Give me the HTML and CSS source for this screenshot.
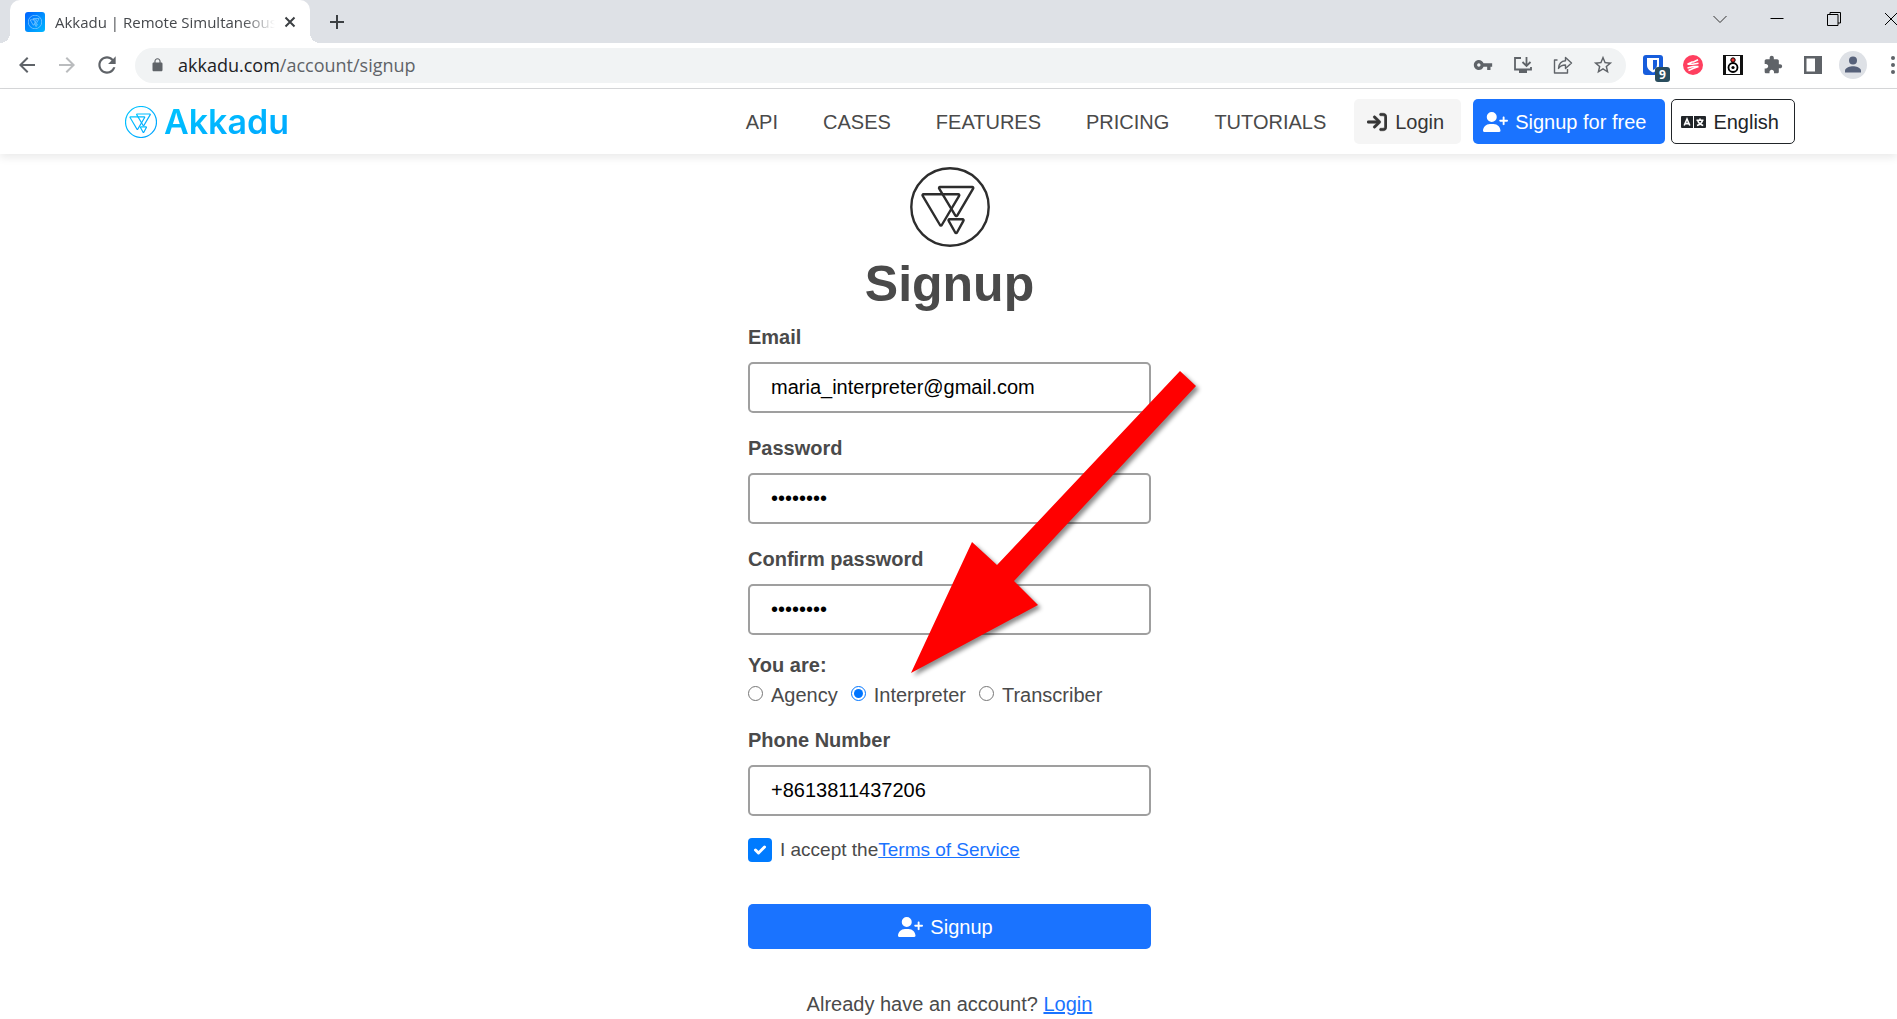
FILE: index.html
```html
<!DOCTYPE html>
<html lang="en">
<head>
<meta charset="utf-8">
<title>Akkadu | Remote Simultaneous Interpretation</title>
<link rel="stylesheet" href="styles.css">
</head>
<body>
<svg class="defs" aria-hidden="true">
  <defs>
    <linearGradient id="sky" x1="0" y1="0" x2="1" y2="1"><stop offset="0" stop-color="#00c8ff"/><stop offset="1" stop-color="#00a0ff"/></linearGradient>
    <linearGradient id="tile" x1="0" y1="0" x2="1" y2="1"><stop offset="0" stop-color="#0062ff"/><stop offset="1" stop-color="#00b8ff"/></linearGradient>
    <symbol id="mark" viewBox="0 0 80 80">
      <g fill="none" stroke-linejoin="round">
        <circle cx="40" cy="40" r="38.7"/>
        <path d="M13.5 27.3H48.3a1 1 0 0 1 .8 1.6L31.8 58a1 1 0 0 1-1.800 0L12.700 28.900a1 1 0 0 1 .8-1.600z"/>
        <path d="M30 20H62.300a1 1 0 0 1 .8 1.600L47.200 48.600a1 1 0 0 1-1.800 0L29.200 21.600a1 1 0 0 1 .8-1.600z"/>
        <path d="M39.500 52.200H52.600a1 1 0 0 1 .8 1.600L47 65.500a1 1 0 0 1-1.800 0L38.700 53.800a1 1 0 0 1 .8-1.600z"/>
      </g>
    </symbol>
    <symbol id="user-plus" viewBox="0 0 640 512"><path d="M96 128a128 128 0 1 1 256 0A128 128 0 1 1 96 128zM0 482.3C0 383.8 79.8 304 178.300 304h91.400C368.200 304 448 383.800 448 482.300c0 16.400-13.300 29.700-29.700 29.700H29.700C13.300 512 0 498.700 0 482.300zM504 312V248H440c-13.300 0-24-10.700-24-24s10.700-24 24-24h64V136c0-13.300 10.700-24 24-24s24 10.700 24 24v64h64c13.300 0 24 10.700 24 24s-10.700 24-24 24H552v64c0 13.300-10.700 24-24 24s-24-10.700-24-24z"/></symbol>
  </defs>
</svg>

<div class="tabstrip">
  <div class="tab">
    <svg class="favicon" viewBox="0 0 20 20"><rect width="20" height="20" rx="3" fill="url(#tile)"/><use class="mark-fav" href="#mark" x="3" y="3" width="14" height="14"/></svg>
    <span class="tab-title">Akkadu | Remote Simultaneous</span>
    <button class="tab-close" aria-label="Close tab"><svg width="12" height="12" viewBox="0 0 12 12"><path d="M1.500 1.500l9 9M10.500 1.500l-9 9" stroke="#3c4043" stroke-width="2"/></svg></button>
  </div>
  <button class="new-tab" aria-label="New tab"><svg width="16" height="16" viewBox="0 0 16 16"><path d="M8 1v14M1 8h14" stroke="#3c4043" stroke-width="2"/></svg></button>
  <div class="window-buttons">
    <button aria-label="Search tabs"><svg width="14" height="14" viewBox="0 0 14 14"><path d="M.5 4L7 10.500 13.500 4" fill="none" stroke="#333"/></svg></button>
    <button aria-label="Minimize"><svg width="14" height="14" viewBox="0 0 14 14"><path d="M.5 6.500h13" stroke="#000"/></svg></button>
    <button aria-label="Restore"><svg width="14" height="14" viewBox="0 0 14 14"><path d="M.5 2.500h10.500v11H.5zM3 2.500V.5h10.500v10.500H11" fill="none" stroke="#000"/></svg></button>
    <button aria-label="Close"><svg width="14" height="14" viewBox="0 0 14 14"><path d="M1 1l12 12M13 1L1 13" stroke="#000"/></svg></button>
  </div>
</div>

<div class="toolbar">
  <button class="tool" aria-label="Back"><svg width="24" height="24" viewBox="0 0 24 24"><path fill="#5f6368" d="M20 11H7.830l5.590-5.590L12 4l-8 8 8 8 1.410-1.410L7.830 13H20v-2z"/></svg></button>
  <button class="tool" aria-label="Forward"><svg width="24" height="24" viewBox="0 0 24 24"><path fill="#babcbe" d="M12 4l-1.410 1.410L16.170 11H4v2h12.170l-5.580 5.590L12 20l8-8z"/></svg></button>
  <button class="tool" aria-label="Reload"><svg width="26" height="26" viewBox="0 0 24 24"><path fill="#5f6368" d="M17.650 6.350C16.200 4.900 14.210 4 12 4c-4.420 0-7.990 3.580-7.990 8s3.570 8 7.990 8c3.730 0 6.840-2.550 7.730-6h-2.080c-.82 2.330-3.040 4-5.650 4-3.310 0-6-2.690-6-6s2.690-6 6-6c1.660 0 3.140.69 4.220 1.780L13 11h7V4l-2.350 2.350z"/></svg></button>
  <div class="omnibox">
    <svg class="lock" width="15" height="16" viewBox="0 0 24 24"><path fill="#5f6368" d="M18 8h-1V6c0-2.760-2.240-5-5-5S7 3.240 7 6v2H6c-1.100 0-2 .9-2 2v10c0 1.100.9 2 2 2h12c1.100 0 2-.9 2-2V10c0-1.100-.9-2-2-2zM15.100 8H8.900V6c0-1.710 1.390-3.100 3.100-3.100s3.100 1.390 3.100 3.100v2z"/></svg>
    <div class="url">akkadu.com<span class="path">/account/signup</span></div>
    <button class="tool" aria-label="Passwords"><svg width="20" height="20" viewBox="0 0 24 24"><path fill="#5f6368" d="M12.650 10C11.830 7.670 9.610 6 7 6c-3.310 0-6 2.690-6 6s2.690 6 6 6c2.610 0 4.830-1.670 5.650-4H17v4h4v-4h2v-4H12.650zM7 14c-1.100 0-2-.9-2-2s.9-2 2-2 2 .9 2 2-.9 2-2 2z"/></svg></button>
    <button class="tool" aria-label="Install"><svg width="20" height="20" viewBox="0 0 20 20"><path d="M8 3H2v11.500h16V12" fill="none" stroke="#5f6368" stroke-width="1.800"/><path d="M6 14h8v4H6z" fill="#5f6368"/><path d="M13.500 2v8M9.500 7l4 4 4-4" fill="none" stroke="#5f6368" stroke-width="1.800"/></svg></button>
    <button class="tool" aria-label="Share"><svg width="20" height="20" viewBox="0 0 20 20"><path d="M4.500 5H1.500v13h13v-4M5.500 13.500c.3-5 3-7.500 7-7.800V2.500l6 5.500-6 5.500v-3.500c-3.500 0-5.500 1-7 3.500z" fill="none" stroke="#5f6368" stroke-width="1.400" stroke-linejoin="round"/></svg></button>
    <button class="tool" aria-label="Bookmark"><svg width="22" height="22" viewBox="0 0 24 24"><path fill="#5f6368" d="M22 9.240l-7.190-.62L12 2 9.190 8.630 2 9.240l5.460 4.730L5.820 21 12 17.270 18.180 21l-1.630-7.030L22 9.240zM12 15.400l-3.760 2.270 1-4.280-3.320-2.880 4.380-.38L12 6.100l1.710 4.040 4.380.38-3.320 2.880 1 4.280L12 15.400z"/></svg></button>
  </div>
  <button class="tool badge-host" aria-label="Bitwarden"><svg width="20" height="20" viewBox="0 0 20 20"><rect width="20" height="20" rx="3" fill="#175ddc"/><path d="M4 3h12v7c0 4-3 6-6 7.500C7 16 4 14 4 10z" fill="#fff"/><path d="M10 5h4v5c0 2.500-2 4-4 5z" fill="#175ddc"/></svg><span class="badge">9</span></button>
  <button class="tool" aria-label="Recorder"><svg width="20" height="20" viewBox="0 0 20 20"><circle cx="10" cy="10" r="10" fill="#ff3f5f"/><path d="M4.500 9.300L9 7l1.500 0L15 4.800M4.500 9.300h5L15.500 8.200M4.500 13L10 11.500h5.500M5.500 15.500L10 13.500l5.500-2" fill="none" stroke="#fff" stroke-width="1.600"/></svg></button>
  <button class="tool" aria-label="Volume"><svg width="20" height="20" viewBox="0 0 20 20"><rect width="20" height="20" fill="#111"/><rect x="3" y="1" width="14" height="18" fill="#fff"/><circle cx="10" cy="12.500" r="4.500" fill="none" stroke="#000" stroke-width="1.800"/><circle cx="10" cy="12.500" r="1.600"/><circle cx="10" cy="5" r="2.200" fill="#e33" stroke="#000"/></svg></button>
  <button class="tool" aria-label="Extensions"><svg width="20" height="20" viewBox="0 0 24 24"><path fill="#5f6368" d="M20.500 11H19V7c0-1.100-.9-2-2-2h-4V3.500C13 2.120 11.880 1 10.500 1S8 2.120 8 3.500V5H4c-1.100 0-1.990.9-1.990 2v3.800H3.500c1.490 0 2.700 1.210 2.700 2.700s-1.210 2.700-2.700 2.700H2V20c0 1.100.9 2 2 2h3.800v-1.500c0-1.490 1.210-2.700 2.700-2.700 1.490 0 2.700 1.210 2.700 2.700V22H17c1.100 0 2-.9 2-2v-4h1.500c1.380 0 2.500-1.120 2.500-2.500S21.880 11 20.500 11z"/></svg></button>
  <button class="tool" aria-label="Side panel"><svg width="18" height="18" viewBox="0 0 18 18"><path fill="#5f6368" fill-rule="evenodd" d="M0 0h18v18H0zM2.500 2.500v13H11v-13z"/></svg></button>
  <button class="tool" aria-label="Profile"><svg width="28" height="28" viewBox="0 0 28 28"><circle cx="14" cy="14" r="14" fill="#dee1e6"/><circle cx="14" cy="9.500" r="4" fill="#56617a"/><path d="M6 21.500v-2c0-2.700 5.300-4.200 8-4.200s8 1.500 8 4.200v2z" fill="#56617a"/></svg></button>
  <button class="tool" aria-label="Menu"><svg width="4" height="18" viewBox="0 0 4 18"><g fill="#5f6368"><circle cx="2" cy="2" r="2"/><circle cx="2" cy="9" r="2"/><circle cx="2" cy="16" r="2"/></g></svg></button>
</div>

<header class="site-header">
  <a class="brand" href="#"><svg class="brand-mark" width="32" height="32"><use href="#mark"/></svg><span class="brand-name">Akkadu</span></a>
  <nav class="links">
    <a href="#">API</a>
    <a href="#">CASES</a>
    <a href="#">FEATURES</a>
    <a href="#">PRICING</a>
    <a href="#">TUTORIALS</a>
  </nav>
  <div class="actions">
    <button class="btn btn-light"><svg width="20" height="20" viewBox="0 0 512 512"><path fill="currentColor" stroke="currentColor" stroke-width="14" d="M352 96h64c17.700 0 32 14.300 32 32V384c0 17.700-14.300 32-32 32H352c-17.700 0-32 14.300-32 32s14.300 32 32 32h64c53 0 96-43 96-96V128c0-53-43-96-96-96H352c-17.700 0-32 14.300-32 32s14.300 32 32 32zm-9.400 182.600c12.500-12.500 12.500-32.800 0-45.300l-128-128c-12.500-12.500-32.800-12.500-45.300 0s-12.500 32.800 0 45.300L242.700 224H32c-17.700 0-32 14.300-32 32s14.300 32 32 32H242.700l-73.400 73.400c-12.500 12.500-12.500 32.800 0 45.300s32.800 12.500 45.300 0l128-128z"/></svg>Login</button>
    <button class="btn btn-primary"><svg width="25" height="20" fill="currentColor"><use href="#user-plus"/></svg>Signup for free</button>
    <button class="btn btn-outline"><svg width="25" height="20" viewBox="0 0 25 20"><path d="M1 4h11v12H1a1 1 0 0 1-1-1V5a1 1 0 0 1 1-1zM13 4h11a1 1 0 0 1 1 1v10a1 1 0 0 1-1 1H13z" fill="#212529"/><path d="M3.200 13.500L6 7l2.800 6.500M4.300 11.600h3.400M15.500 8.200h7M19 6.500v1.700M21.500 8.500c-.8 2.500-3 4.300-5.500 5M16.800 9c.8 2 2.900 4 5.400 4.500" fill="none" stroke="#fff" stroke-width="1.600"/></svg>English</button>
  </div>
</header>

<main class="page">
  <form class="signup">
    <svg class="logo" width="80" height="80"><use href="#mark"/></svg>
    <h1>Signup</h1>

    <div class="field">
      <label for="email">Email</label>
      <input class="box" id="email" type="email" value="maria_interpreter@gmail.com">
    </div>
    <div class="field">
      <label for="password">Password</label>
      <input class="box" id="password" type="password" value="password">
    </div>
    <div class="field">
      <label for="confirm">Confirm password</label>
      <input class="box" id="confirm" type="password" value="password">
    </div>

    <fieldset class="role">
      <legend>You are:</legend>
      <div class="choices">
        <label><input type="radio" name="role">Agency</label>
        <label><input type="radio" name="role" checked>Interpreter</label>
        <label><input type="radio" name="role">Transcriber</label>
      </div>
    </fieldset>

    <div class="field">
      <label for="phone">Phone Number</label>
      <input class="box" id="phone" type="tel" value="+8613811437206">
    </div>

    <div class="terms">
      <input id="terms" type="checkbox" checked>
      <label for="terms">I accept the</label><a href="#">Terms of Service</a>
    </div>

    <button class="btn btn-primary submit" type="button"><svg width="25" height="20" fill="currentColor"><use href="#user-plus"/></svg>Signup</button>
    <p class="alt">Already have an account? <a href="#">Login</a></p>

    <svg class="pointer" width="300" height="320" viewBox="0 0 300 320" aria-hidden="true"><path fill="#f00" d="M11 313L72 182 97 205 280 11 296 26 114 221 138 245z"/></svg>
  </form>
</main>
</body>
</html>
```
FILE: styles.css
```css
* { box-sizing: border-box; }
body {
  margin: 0;
  background: #fff;
  color: #4a4a4a;
  font: 20px/30px "Liberation Sans", Arial, sans-serif;
  overflow-x: hidden;
}
button { border: 0; padding: 0; background: none; font: inherit; color: inherit; }
a { color: #1a73ff; }
svg { display: block; flex: none; }
.defs { position: absolute; width: 0; height: 0; }

/* browser window */
.tabstrip { display: flex; height: 43px; padding-left: 10px; background: #dee1e6; overflow: hidden; }
.tab {
  position: relative;
  display: flex;
  align-items: center;
  width: 300px;
  padding: 0 14px 0 15px;
  border-radius: 10px 10px 0 0;
  background: #fff;
}
.tab::before, .tab::after {
  content: "";
  position: absolute;
  bottom: 0;
  width: 10px;
  height: 10px;
}
.tab::before { left: -10px; background: radial-gradient(circle at 0 0, #dee1e6 10px, #fff 10px); }
.tab::after { right: -10px; background: radial-gradient(circle at 100% 0, #dee1e6 10px, #fff 10px); }
.favicon { width: 20px; height: 20px; }
.mark-fav { stroke: #8cd0ff; stroke-width: 4px; }
.tab-title {
  flex: 1;
  margin: 0 9px 0 10px;
  overflow: hidden;
  white-space: nowrap;
  font: 15px/22px "Open Sans", "Noto Sans", sans-serif;
  color: #45484c;
  -webkit-mask-image: linear-gradient(to right, #000 85%, transparent);
  mask-image: linear-gradient(to right, #000 85%, transparent);
}
.new-tab { width: 54px; display: flex; align-items: center; justify-content: center; }
.window-buttons { display: flex; height: 37px; margin: 0 -22px 0 auto; }
.window-buttons button { width: 57px; display: flex; align-items: center; justify-content: center; }

.toolbar {
  display: flex;
  align-items: center;
  height: 46px;
  padding: 0 0 1px 7px;
  margin-right: -16px;
  border-bottom: 1px solid #d6d7d9;
}
.tool { display: flex; align-items: center; justify-content: center; flex: none; width: 40px; height: 34px; }
.omnibox {
  flex: 1;
  display: flex;
  align-items: center;
  height: 35px;
  margin: 0 7px 0 8px;
  padding: 0 3px 0 15px;
  border-radius: 18px;
  background: #f1f3f4;
}
.url { flex: 1; margin-left: 13px; font: 18px/28px "Open Sans", "Noto Sans", sans-serif; color: #202124; }
.path { color: #5f6368; }
.badge-host { position: relative; }
.badge {
  position: absolute;
  left: 22px;
  top: 19px;
  width: 15px;
  border-radius: 3px;
  background: #2a4d5e;
  color: #fff;
  font: bold 12px/15px "Open Sans", sans-serif;
}

/* site header */
.site-header {
  position: relative;
  display: flex;
  align-items: center;
  height: 65px;
  padding: 0 102px 0 125px;
  box-shadow: 0 4px 8px rgba(0, 0, 0, 0.08);
}
.brand { display: flex; align-items: center; gap: 7px; text-decoration: none; }
.brand-mark { stroke: url(#sky); stroke-width: 3px; }
.brand-name {
  font: 600 34px/40px Inter, Roboto, sans-serif;
  background: linear-gradient(165deg, #00c8ff, #00a4ff);
  -webkit-background-clip: text;
  background-clip: text;
  color: transparent;
}
.links { display: flex; gap: 45px; margin: 0 28px 0 auto; }
.links a { color: #4a4a4a; text-decoration: none; }
.actions { display: flex; gap: 6px; }
.btn {
  display: flex;
  align-items: center;
  gap: 7px;
  height: 45px;
  padding: 0 17px 0 10px;
  border-radius: 5px;
}
.btn-light { gap: 8px; margin-right: 6px; padding-left: 13px; background: #f5f5f5; color: #363636; }
.btn-primary { padding-right: 19px; background: #1a73ff; color: #fff; }
.btn-outline { border: 1px solid #212529; color: #212529; padding: 0 15px 0 9px; }

/* signup form */
.page { padding-left: 2px; }
.signup { position: relative; width: 403px; margin: 0 auto; padding-top: 13px; }
.logo { margin: 0 auto; stroke: #2d2d2d; stroke-width: 2.4px; }
h1 { margin: 7px 0 8px; font-size: 50px; line-height: 60px; text-align: center; }
.field { display: flex; flex-direction: column; gap: 10px; margin-bottom: 20px; }
.field label, legend { font-weight: bold; }
.box {
  width: 100%;
  height: 51px;
  padding: 0 21px;
  border: 2px solid #9f9f9f;
  border-radius: 5px;
  background: #fff;
  color: #000;
  font: inherit;
}
.role { margin: -5px 0 15px; padding: 0; border: 0; }
legend { padding: 0; }
.choices { display: flex; gap: 13px; }
.choices label { display: flex; gap: 8px; }
.choices input { width: 15px; height: 15px; margin: 6px 0 0; accent-color: #0075ff; }
.terms { display: flex; align-items: center; height: 24px; margin: 22px 0 42px; font-size: 19px; }
.terms input {
  appearance: none;
  width: 24px;
  height: 24px;
  margin: 0 8px 0 0;
  border-radius: 4px;
  background: #007bff url("data:image/svg+xml,%3Csvg xmlns='http://www.w3.org/2000/svg' viewBox='0 0 24 24'%3E%3Cpath d='M7.500 12l3 3 6-6' fill='none' stroke='%23fff' stroke-width='3' stroke-linecap='round' stroke-linejoin='round'/%3E%3C/svg%3E");
}
.submit { width: 100%; justify-content: center; padding: 0; }
.submit svg { margin-left: -8px; }
.alt { margin: 40px 0 0; text-align: center; }
.alt a { text-decoration-thickness: 2px; }

/* arrow laid over the fields */
.pointer {
  position: absolute;
  left: 152px;
  top: 206px;
  pointer-events: none;
  filter: drop-shadow(3px 3px 2px rgba(0, 0, 0, 0.45));
}
```
